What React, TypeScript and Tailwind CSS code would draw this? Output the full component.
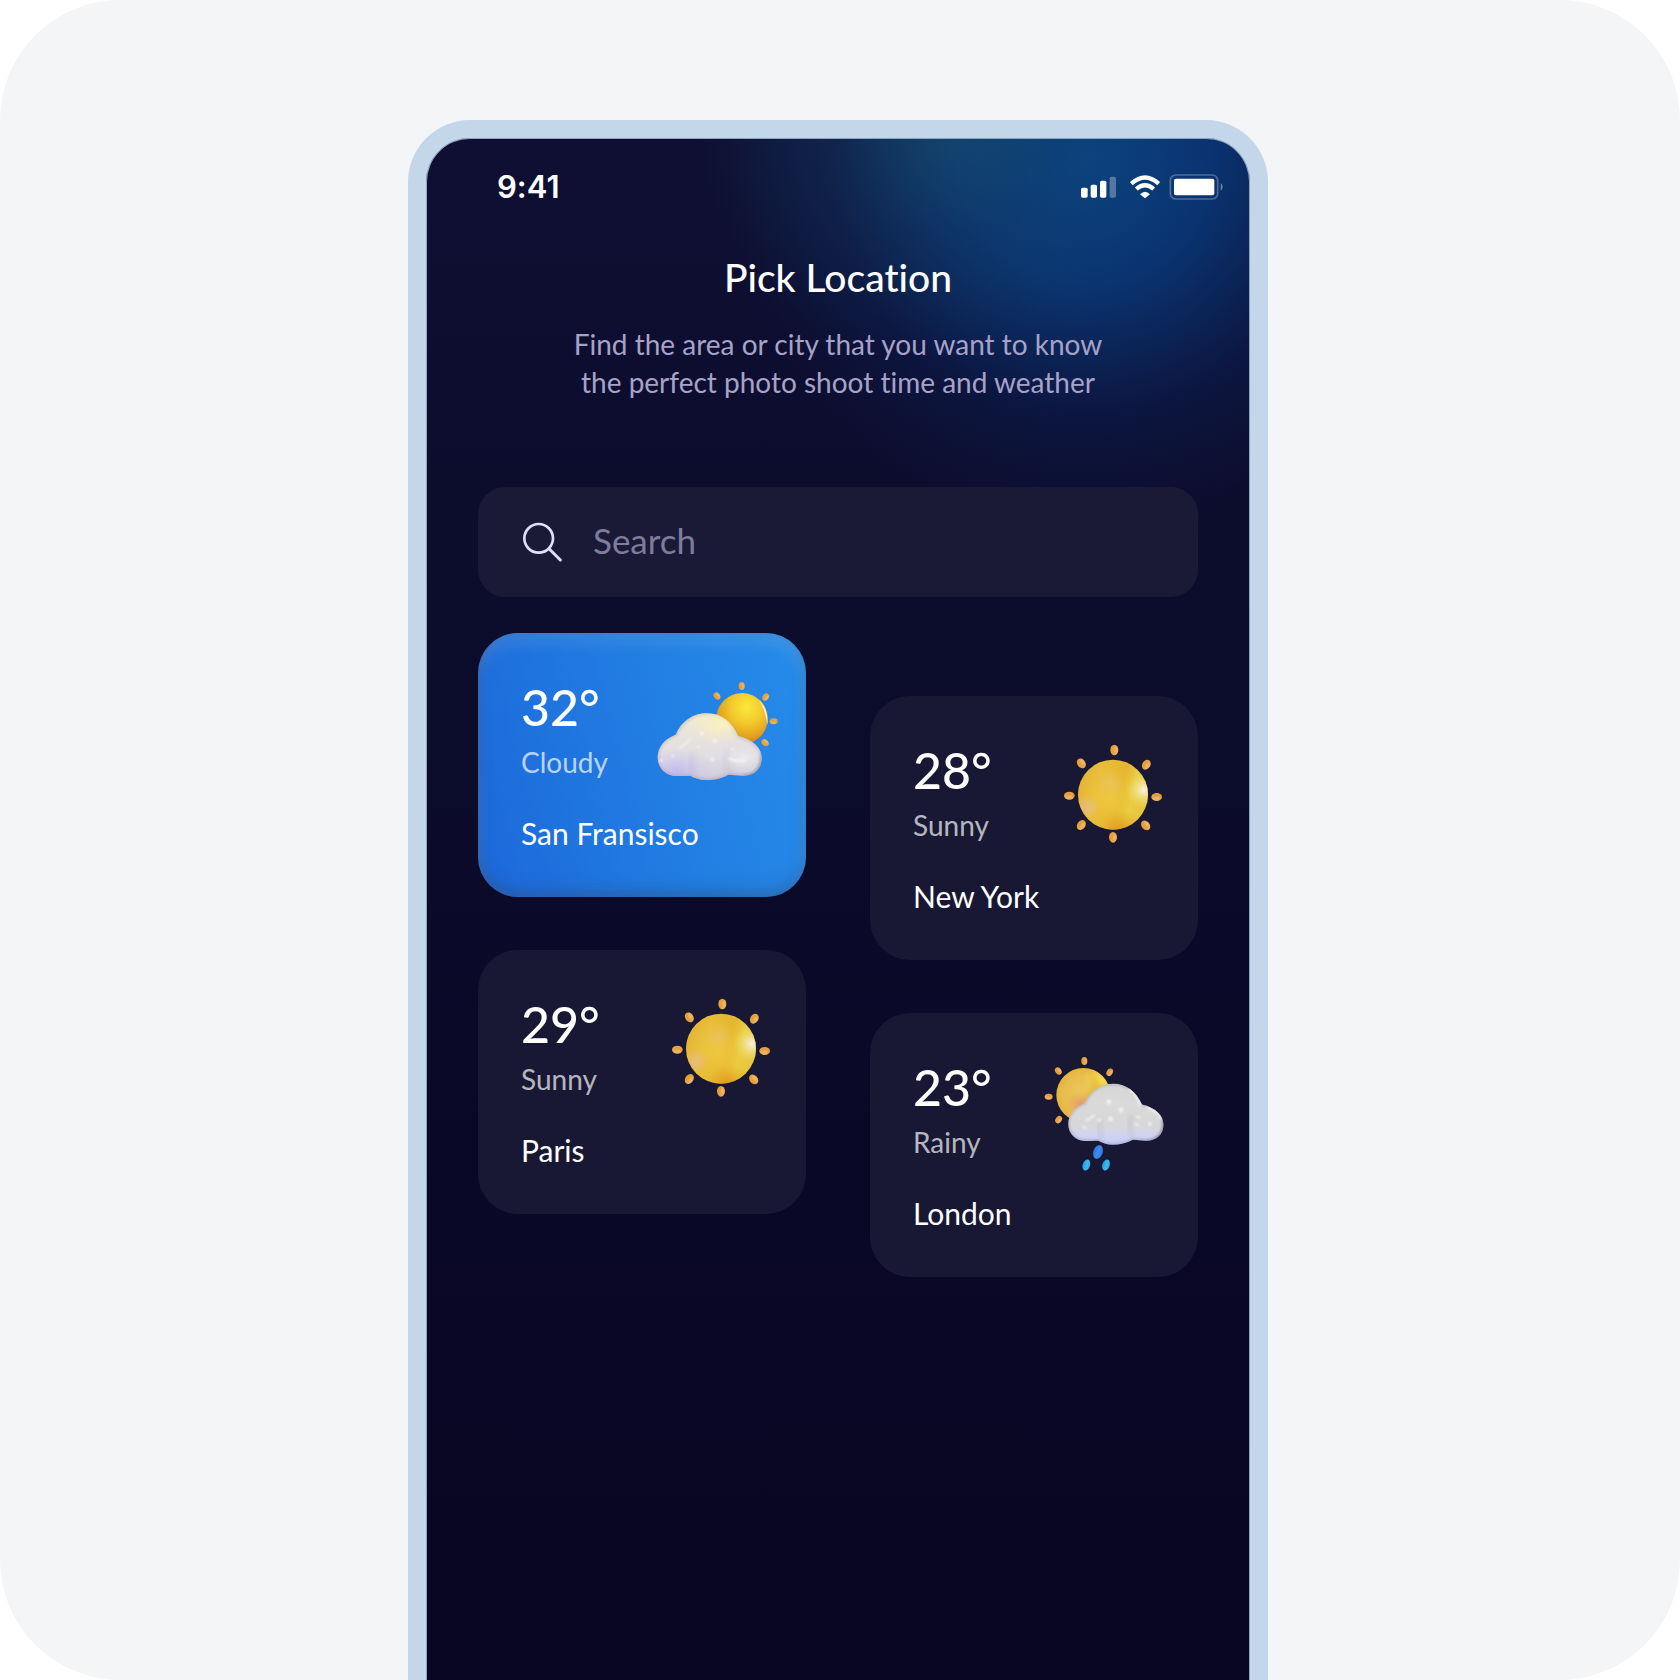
import React from "react";

type Condition = "Cloudy" | "Sunny" | "Rainy";

type Place = {
  city: string;
  temperature: number;
  condition: Condition;
  active?: boolean;
};

const leftColumn: Place[] = [
  { city: "San Fransisco", temperature: 32, condition: "Cloudy", active: true },
  { city: "Paris", temperature: 29, condition: "Sunny" },
];

const rightColumn: Place[] = [
  { city: "New York", temperature: 28, condition: "Sunny" },
  { city: "London", temperature: 23, condition: "Rainy" },
];

/* Gradients shared by all weather drawings. */
function WeatherDefs() {
  return (
    <svg className="absolute size-0" aria-hidden="true">
      <defs>
        <linearGradient id="sunBase" x1="0" y1="0" x2="1" y2="0.25">
          <stop offset="0" stopColor="#e3ae36" />
          <stop offset="0.35" stopColor="#e8bd3a" />
          <stop offset="0.68" stopColor="#e5b52e" />
          <stop offset="0.85" stopColor="#e9cf45" />
          <stop offset="1" stopColor="#e6c640" />
        </linearGradient>
        <radialGradient id="sunCore" cx="0.46" cy="0.55" r="0.5">
          <stop offset="0" stopColor="#efc940" stopOpacity="0.95" />
          <stop offset="1" stopColor="#ecc53a" stopOpacity="0" />
        </radialGradient>
        <radialGradient id="sunSpot" cx="0.46" cy="0.34" r="0.2">
          <stop offset="0" stopColor="#e8c468" stopOpacity="0.7" />
          <stop offset="1" stopColor="#e8c468" stopOpacity="0" />
        </radialGradient>
        <radialGradient id="sunBounce" cx="0.14" cy="0.68" r="0.18">
          <stop offset="0" stopColor="#e6bd88" stopOpacity="0.9" />
          <stop offset="1" stopColor="#e6bd80" stopOpacity="0" />
        </radialGradient>
        <radialGradient id="sunGlint" cx="0.94" cy="0.43" r="0.26">
          <stop offset="0" stopColor="#fbf4e4" />
          <stop offset="0.35" stopColor="#f3e4a0" stopOpacity="0.8" />
          <stop offset="1" stopColor="#f0dd60" stopOpacity="0" />
        </radialGradient>
        <radialGradient id="sunShade" cx="0.62" cy="1.04" r="0.32">
          <stop offset="0" stopColor="#dc8a10" stopOpacity="0.9" />
          <stop offset="1" stopColor="#e3a01c" stopOpacity="0" />
        </radialGradient>
        <linearGradient id="ray" x1="0" y1="0" x2="1" y2="0.4">
          <stop offset="0" stopColor="#eda62f" />
          <stop offset="0.5" stopColor="#e59e3c" />
          <stop offset="1" stopColor="#eeb264" />
        </linearGradient>
        <radialGradient id="warmSun" cx="0.6" cy="0.28" r="0.82">
          <stop offset="0" stopColor="#fbe93a" />
          <stop offset="0.38" stopColor="#f3c92c" />
          <stop offset="0.7" stopColor="#e2a01f" />
          <stop offset="1" stopColor="#d65d14" />
        </radialGradient>
        <radialGradient id="paleSun" cx="0.5" cy="0.5" r="0.6">
          <stop offset="0" stopColor="#ecc85c" />
          <stop offset="0.6" stopColor="#e9bd4e" />
          <stop offset="1" stopColor="#e2ad38" />
        </radialGradient>
        <radialGradient id="blush" cx="0.44" cy="0.68" r="0.26">
          <stop offset="0" stopColor="#e69678" />
          <stop offset="1" stopColor="#e6ad5a" stopOpacity="0" />
        </radialGradient>
        <radialGradient id="lemon" cx="0.82" cy="0.25" r="0.35">
          <stop offset="0" stopColor="#f5e055" />
          <stop offset="1" stopColor="#f2dc50" stopOpacity="0" />
        </radialGradient>
        <linearGradient id="cloudWarm" x1="0.45" y1="0" x2="0.55" y2="1">
          <stop offset="0" stopColor="#f1ead0" />
          <stop offset="0.3" stopColor="#e8e3dc" />
          <stop offset="0.65" stopColor="#e1dde4" />
          <stop offset="1" stopColor="#cfccdc" />
        </linearGradient>
        <radialGradient id="cloudYellow" cx="0.6" cy="0.16" r="0.3">
          <stop offset="0" stopColor="#fbf2c0" />
          <stop offset="1" stopColor="#f8edc0" stopOpacity="0" />
        </radialGradient>
        <radialGradient id="cloudLilac" cx="0.18" cy="0.88" r="0.36">
          <stop offset="0" stopColor="#c3bbee" />
          <stop offset="1" stopColor="#cfc9ea" stopOpacity="0" />
        </radialGradient>
        <radialGradient id="cloudLobe" cx="0.83" cy="0.66" r="0.24">
          <stop offset="0" stopColor="#edebee" />
          <stop offset="1" stopColor="#e2dfe6" stopOpacity="0" />
        </radialGradient>
        <linearGradient id="cloudCool" x1="0.5" y1="0" x2="0.5" y2="1">
          <stop offset="0" stopColor="#d6d6d7" />
          <stop offset="0.3" stopColor="#dadadb" />
          <stop offset="0.7" stopColor="#d7d7d9" />
          <stop offset="0.86" stopColor="#cfd3f2" />
          <stop offset="1" stopColor="#c5cefc" />
        </linearGradient>
        <linearGradient id="drop" x1="0" y1="0" x2="1" y2="0">
          <stop offset="0" stopColor="#2a74e4" />
          <stop offset="0.5" stopColor="#3d8af0" />
          <stop offset="1" stopColor="#2e78e2" />
        </linearGradient>
        <linearGradient id="dropSmall" x1="0" y1="0" x2="1" y2="0">
          <stop offset="0" stopColor="#199ee8" />
          <stop offset="0.6" stopColor="#43b8ee" />
          <stop offset="1" stopColor="#2aa8e6" />
        </linearGradient>
        <filter id="soft1" x="-60%" y="-60%" width="220%" height="220%">
          <feGaussianBlur stdDeviation="3" />
        </filter>
        <filter id="soft2" x="-60%" y="-60%" width="220%" height="220%">
          <feGaussianBlur stdDeviation="8" />
        </filter>
        <path
          id="cloudShape"
          d="M80 194C98 152 133 130 174 130C217 130 248 156 268 198C312 208 338 234 338 264C338 299 312 318 282 317C264 317 252 314 238 314C216 326 195 330 172 330C152 330 138 324 124 317C108 317 95 318 80 318C48 316 26 292 26 262C26 230 48 206 80 194Z"
        />
        <clipPath id="cloudClip">
          <use href="#cloudShape" />
        </clipPath>
      </defs>
    </svg>
  );
}

type RayProps = { x: number; y: number; turn: number; rx?: number; ry?: number };

function Ray({ x, y, turn, rx = 12, ry = 16 }: RayProps) {
  return (
    <g transform={`translate(${x} ${y}) rotate(${turn})`}>
      <ellipse rx={rx} ry={ry} fill="url(#ray)" />
      <ellipse cx={rx * 0.3} cy={-ry * 0.1} rx={rx * 0.35} ry={ry * 0.5} fill="#f2c080" opacity="0.5" />
    </g>
  );
}

function SunnyDrawing() {
  return (
    <g transform="translate(60 36)">
      <circle cx="189" cy="179" r="105" fill="url(#sunBase)" />
      <circle cx="189" cy="179" r="105" fill="url(#sunCore)" />
      <circle cx="189" cy="179" r="105" fill="url(#sunSpot)" />
      <circle cx="189" cy="179" r="105" fill="url(#sunBounce)" />
      <circle cx="189" cy="179" r="105" fill="url(#sunShade)" />
      <circle cx="189" cy="179" r="105" fill="url(#sunGlint)" />
      <Ray x={193} y={45} turn={0} />
      <Ray x={94} y={85} turn={-35} />
      <Ray x={289} y={89} turn={32} />
      <Ray x={58} y={182} turn={90} />
      <Ray x={320} y={186} turn={90} />
      <Ray x={94} y={270} turn={38} />
      <Ray x={287} y={271} turn={-40} />
      <Ray x={189} y={307} turn={0} />
    </g>
  );
}

function CloudyDrawing() {
  return (
    <g transform="translate(33 30)">
      <circle cx="279" cy="146" r="77" fill="url(#warmSun)" />
      <path d="M329 89C349 108 358 132 355 164C350 134 345 112 329 89Z" fill="#fdeee2" />
      <Ray x={278} y={48} turn={0} rx={9} ry={12} />
      <Ray x={204} y={78} turn={-35} rx={9} ry={12} />
      <Ray x={350} y={81} turn={35} rx={9} ry={12} />
      <Ray x={374} y={154} turn={90} rx={9} ry={12} />
      <Ray x={348} y={218} turn={-50} rx={9} ry={12} />
      <use href="#cloudShape" fill="url(#cloudWarm)" />
      <use href="#cloudShape" fill="url(#cloudLilac)" />
      <use href="#cloudShape" fill="url(#cloudLobe)" />
      <g clipPath="url(#cloudClip)">
        <use href="#cloudShape" fill="none" stroke="#9c93a8" strokeWidth="12" opacity="0.3" filter="url(#soft1)" />
        <path d="M338 250C340 300 312 318 282 318" fill="none" stroke="#8f8a94" strokeWidth="8" opacity="0.55" filter="url(#soft1)" />
        <path d="M132 250C124 275 126 300 140 322" fill="none" stroke="#bdb8d2" strokeWidth="12" opacity="0.35" filter="url(#soft2)" />
        <path d="M232 245C228 275 232 298 246 314" fill="none" stroke="#c0bbd0" strokeWidth="12" opacity="0.4" filter="url(#soft2)" />
        <path d="M92 232Q108 228 124 206" fill="none" stroke="#ffffff" strokeWidth="6" strokeLinecap="round" opacity="0.45" filter="url(#soft1)" />
        <path d="M240 266Q262 276 286 272" fill="none" stroke="#ffffff" strokeWidth="9" strokeLinecap="round" opacity="0.5" filter="url(#soft1)" />
        <g fill="#ffffff" opacity="0.6" filter="url(#soft1)">
          <circle cx="159" cy="190" r="7" />
          <circle cx="198" cy="213" r="7" />
          <circle cx="148" cy="230" r="4" />
          <circle cx="191" cy="268" r="6" />
          <circle cx="72" cy="258" r="4" />
          <circle cx="36" cy="272" r="5" />
          <circle cx="250" cy="238" r="4" />
        </g>
      </g>
      <use href="#cloudShape" fill="url(#cloudYellow)" />
    </g>
  );
}

function RainyDrawing() {
  return (
    <g>
      <circle cx="160" cy="165" r="81" fill="url(#paleSun)" />
      <circle cx="160" cy="165" r="81" fill="url(#lemon)" />
      <path d="M182 98C192 128 182 156 150 186L190 190L222 140Z" fill="#e0a732" opacity="0.5" filter="url(#soft2)" />
      <circle cx="160" cy="165" r="81" fill="url(#blush)" />
      <Ray x={163} y={63} turn={0} rx={9} ry={12} />
      <Ray x={85} y={93} turn={-35} rx={9} ry={12} />
      <Ray x={239} y={97} turn={30} rx={9} ry={12} />
      <Ray x={56} y={170} turn={90} rx={9} ry={12} />
      <Ray x={86} y={239} turn={38} rx={9} ry={12} />
      <g transform="translate(91 12) scale(0.915)">
        <use href="#cloudShape" fill="url(#cloudCool)" />
        <g clipPath="url(#cloudClip)">
          <use href="#cloudShape" fill="none" stroke="#7d7d86" strokeWidth="11" opacity="0.3" filter="url(#soft1)" />
          <path d="M338 250C340 300 312 318 282 318" fill="none" stroke="#77777f" strokeWidth="8" opacity="0.5" filter="url(#soft1)" />
          <path d="M132 250C124 275 126 296 138 312" fill="none" stroke="#b9b9c4" strokeWidth="12" opacity="0.5" filter="url(#soft2)" />
          <path d="M232 235C224 265 228 290 240 308" fill="none" stroke="#b9b9c3" strokeWidth="12" opacity="0.5" filter="url(#soft2)" />
          <path d="M226 148Q254 170 262 200M284 208Q318 220 330 244" fill="none" stroke="#ffffff" strokeWidth="7" strokeLinecap="round" opacity="0.9" filter="url(#soft1)" />
          <path d="M86 250Q96 246 112 234M74 272L84 276M244 262L256 266M250 238L260 240" fill="none" stroke="#ffffff" strokeWidth="7" strokeLinecap="round" opacity="0.6" filter="url(#soft1)" />
          <g fill="#ffffff" opacity="0.65" filter="url(#soft1)">
            <circle cx="159" cy="190" r="8" />
            <circle cx="199" cy="216" r="8" />
            <circle cx="128" cy="250" r="6" />
            <circle cx="165" cy="246" r="8" />
            <circle cx="294" cy="262" r="6" />
          </g>
        </g>
      </g>
      <ellipse cx="204" cy="336" rx="14" ry="21" transform="rotate(18 204 336)" fill="url(#drop)" />
      <ellipse cx="169" cy="375" rx="11" ry="17" transform="rotate(18 169 375)" fill="url(#dropSmall)" />
      <ellipse cx="228" cy="375" rx="11" ry="17" transform="rotate(18 228 375)" fill="url(#dropSmall)" />
    </g>
  );
}

function WeatherIcon({ condition }: { condition: Condition }) {
  return (
    <svg viewBox="0 0 450 420" className="h-[140px] w-[150px] shrink-0" role="img" aria-label={condition}>
      {condition === "Sunny" && <SunnyDrawing />}
      {condition === "Cloudy" && <CloudyDrawing />}
      {condition === "Rainy" && <RainyDrawing />}
    </svg>
  );
}

function StatusIcons() {
  return (
    <div className="flex items-center gap-2 text-white" aria-hidden="true">
      <svg viewBox="64 40 123 84" className="h-7 w-[41px]" fill="currentColor">
        <rect x="64" y="84" width="20" height="30" rx="5" />
        <rect x="93" y="75" width="19" height="39" rx="5" />
        <rect x="121" y="63" width="19" height="51" rx="5" />
        <rect x="150" y="51" width="19" height="63" rx="5" opacity="0.3" />
      </svg>
      <svg viewBox="210 40 90 84" className="h-7 w-[30px]" fill="none" stroke="currentColor">
        <path d="M214 72Q255 35 296 72" strokeWidth="13" />
        <path d="M229 88Q255 65 281 88" strokeWidth="13" />
        <path d="M240 104Q255 89 270 104L255 116Z" fill="currentColor" stroke="none" />
      </svg>
      <svg viewBox="325 40 165 84" className="h-7 w-[55px]" fill="currentColor">
        <rect x="332" y="46" width="142" height="72" rx="16" fill="none" stroke="currentColor" strokeWidth="5" opacity="0.28" />
        <rect x="343" y="57" width="121" height="50" rx="6" />
        <path d="M483 70Q489 75 489 82Q489 89 483 94Z" opacity="0.4" />
      </svg>
    </div>
  );
}

function PlaceCard({ place }: { place: Place }) {
  const surface = place.active
    ? "bg-[linear-gradient(75deg,#1d6bdc_8%,#217ce1_50%,#268cea_100%)] shadow-[inset_0_8px_16px_rgba(255,255,255,0.14),inset_0_-8px_16px_rgba(50,70,100,0.28),inset_2px_0_10px_rgba(40,60,100,0.3)]"
    : "bg-[#191834]";
  return (
    <button type="button" className={`block w-full rounded-[40px] pb-[46px] text-left text-white ${surface}`}>
      <span className="flex justify-between pl-[43px] pr-[18px] pt-[27px]">
        <span className="flex flex-col pt-[17px]">
          <span className="text-[50px] font-medium leading-[60px]">{place.temperature}°</span>
          <span className="mt-[9px] text-[28px] leading-8 text-white/70">{place.condition}</span>
        </span>
        <WeatherIcon condition={place.condition} />
      </span>
      <span className="mt-[15px] block pl-[43px] text-[30px] leading-9">{place.city}</span>
    </button>
  );
}

export default function App() {
  return (
    <div className="bg-white font-['Lato',sans-serif] [font-variant-ligatures:none]">
      <WeatherDefs />
      <main className="flex min-h-screen flex-col items-center rounded-[120px] bg-[#f4f5f7] pr-1 pt-[120px]">
        <section className="flex w-full max-w-[860px] flex-1 flex-col rounded-t-[62px] bg-[#c4d6ea] px-[18px] pt-[18px]">
          <div className="flex-1 rounded-t-[44px] bg-[radial-gradient(ellipse_260px_230px_at_520px_-10px,rgba(28,88,110,0.5)_0%,rgba(24,70,104,0.28)_45%,rgba(15,20,60,0)_100%),radial-gradient(ellipse_360px_370px_at_660px_20px,rgba(8,74,146,0.85)_0%,rgba(8,66,138,0.7)_35%,rgba(10,40,100,0.3)_70%,rgba(12,16,52,0)_100%),linear-gradient(180deg,#0e0f32_0%,#0c0c2c_30%,#0a0827_65%,#090623_100%)] shadow-[inset_0_1px_0_0_#8aa4bc,inset_1px_0_0_0_#8aa4bc,inset_-1px_0_0_0_#8aa4bc]">
            <div className="flex items-center justify-between pl-[71px] pr-[27px] pt-[29px]">
              <time className="font-['Inter',sans-serif] text-[31px] font-semibold leading-10 text-white">9:41</time>
              <StatusIcons />
            </div>

            <header className="mt-[46px] text-center">
              <h1 className="text-[39px] font-medium leading-[48px] text-white">Pick Location</h1>
              <p className="mx-auto mt-6 max-w-[560px] text-[28px] leading-[38px] text-[#a7a2c8]">
                Find the area or city that you want to know the perfect photo shoot time and weather
              </p>
            </header>

            <div className="px-[52px]">
              <div className="mt-[86px] flex h-[110px] items-center rounded-[27px] bg-[#1a1a37] pl-[45px] pr-8">
                <svg viewBox="0 0 120 120" className="size-10 shrink-0" fill="none" stroke="#e0dcfa" aria-hidden="true">
                  <circle cx="47" cy="49" r="43" strokeWidth="8" />
                  <path d="M79 81L112 114" strokeWidth="9" strokeLinecap="round" />
                </svg>
                <input
                  type="search"
                  aria-label="Search"
                  placeholder="Search"
                  className="ml-[30px] h-12 min-w-0 flex-1 bg-transparent pb-1 text-[35px] leading-10 text-white outline-none placeholder:text-[#7f7b9c]"
                />
              </div>

              <div className="mt-9 grid grid-cols-2 items-start gap-16">
                <div className="flex flex-col gap-[53px]">
                  {leftColumn.map((place) => (
                    <PlaceCard key={place.city} place={place} />
                  ))}
                </div>
                <div className="flex flex-col gap-[53px] pt-[63px]">
                  {rightColumn.map((place) => (
                    <PlaceCard key={place.city} place={place} />
                  ))}
                </div>
              </div>
            </div>
          </div>
        </section>
      </main>
    </div>
  );
}
